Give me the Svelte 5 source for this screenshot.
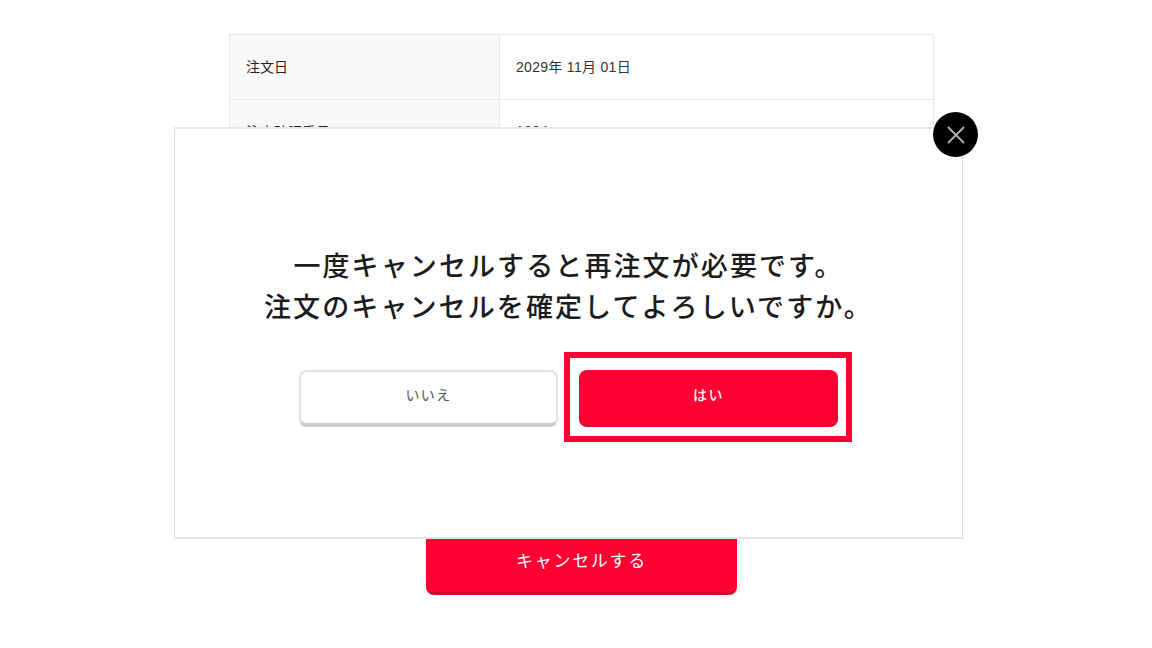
<script lang="ts">
	const rows = [
		['注文日', '2029年 11月 01日'],
		['注文確認番号', '1234'],
		['お支払い方法', 'クレジットカード'],
		['お届け先', '東京都'],
		['お届け日', '2029年 11月 05日'],
		['合計金額', '¥3,000']
	];
</script>

<div class="page">
	<table class="orders">
		<tbody>
			{#each rows as [label, value]}
				<tr>
					<th>{label}</th>
					<td>{value}</td>
				</tr>
			{/each}
		</tbody>
	</table>

	<button class="btn cancel">キャンセルする</button>

	<div class="modal">
		<button class="close" aria-label="閉じる">
			<svg width="18" height="18" viewBox="0 0 18 18">
				<path d="M1 1 L17 17 M17 1 L1 17" />
			</svg>
		</button>
		<p class="message">一度キャンセルすると再注文が必要です。<br />注文のキャンセルを確定してよろしいですか。</p>
		<div class="actions">
			<button class="btn no">いいえ</button>
			<button class="btn yes">はい</button>
		</div>
	</div>
</div>

<style>
	:global(body) {
		background: #fff;
		overflow: hidden;
	}

	.page {
		position: relative;
		height: 648px;
		box-sizing: border-box;
		padding: 34px 0 0 229px;
		font-family: 'Noto Sans CJK JP', 'Liberation Sans', sans-serif;
		color: #222;
	}

	.orders {
		width: 705px;
		border-collapse: collapse;
		table-layout: fixed;
		font-size: 14px;
		font-family: 'Liberation Sans', 'Noto Sans CJK JP', sans-serif;
	}

	th,
	td {
		height: 65px;
		box-sizing: border-box;
		padding: 0 16px 3px;
		border: 1px solid #e8e8e8;
		text-align: left;
		font-weight: 400;
	}

	th {
		width: 270px;
		background: #f9f9f9;
	}

	td {
		color: #333;
		letter-spacing: 0.3px;
	}

	.btn {
		display: block;
		box-sizing: border-box;
		border-radius: 8px;
		font-family: inherit;
		cursor: pointer;
	}

	.cancel {
		position: absolute;
		left: 426px;
		top: 527px;
		width: 311px;
		height: 68px;
		border: 0;
		border-bottom: 3px solid #d0062f;
		background: #ff0033;
		color: #fff;
		font-size: 17px;
		letter-spacing: 0.1em;
	}

	.modal {
		position: absolute;
		left: 174px;
		top: 127px;
		width: 789px;
		height: 412px;
		box-sizing: border-box;
		display: flex;
		flex-direction: column;
		align-items: center;
		padding-top: 115px;
		background: #fff;
		border: 1px solid #ddd;
		border-top: 2px solid #e6e6e6;
		border-bottom: 2px solid #e6e6e6;
	}

	.close {
		position: absolute;
		top: -17px;
		right: -16px;
		width: 45px;
		height: 45px;
		display: flex;
		align-items: center;
		justify-content: center;
		padding: 0;
		border: 0;
		border-radius: 50%;
		background: #000;
		cursor: pointer;
	}

	.close path {
		fill: none;
		stroke: #b0b0b0;
		stroke-width: 1.8;
	}

	.message {
		margin: 0;
		font-size: 27px;
		font-weight: 500;
		line-height: 41px;
		letter-spacing: 2.1px;
		text-align: center;
		color: #1c1c1c;
	}

	.actions {
		display: flex;
		gap: 21px;
		margin-top: 44px;
	}

	.no,
	.yes {
		width: 259px;
		height: 57px;
		padding-bottom: 8px;
		font-size: 14px;
		letter-spacing: 0.1em;
	}

	.no {
		background: #fff;
		color: #555;
		border: 2px solid #e2e2e2;
		border-bottom: 4px solid #ccc;
	}

	.yes {
		position: relative;
		background: #ff0033;
		color: #fff;
		font-weight: 500;
		border: 0;
		border-bottom: 2px solid #d0062f;
	}

	/* annotation frame around the confirm button */
	.yes::after {
		content: '';
		position: absolute;
		inset: -18px -14px -17px -15px;
		border: 6px solid #ff0033;
		pointer-events: none;
	}
</style>
